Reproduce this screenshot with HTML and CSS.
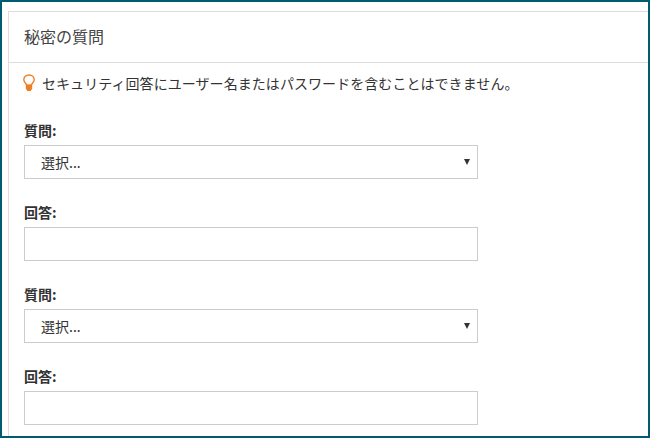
FILE: index.html
```html
<!DOCTYPE html>
<html lang="ja">
<head>
  <meta charset="UTF-8">
  <meta name="viewport" content="width=device-width, initial-scale=1.0">
  <title>秘密の質問</title>
  <link rel="stylesheet" href="styles.css">
</head>
<body>
  <div class="frame">
    <section class="panel">
      <h2 class="panel-title">秘密の質問</h2>
      <div class="panel-body">
        <p class="notice">
          <svg class="bulb" width="14" height="18" viewBox="0 0 14 18" aria-hidden="true">
            <path d="M4.800 11.200C4.400 9.400 1.800 8.400 1.800 5.800 1.800 3 4.100 1 7 1s5.200 2 5.200 4.800c0 2.600-2.600 3.600-3 5.400z" fill="#fff" stroke="#ef7d22" stroke-width="1.400"/>
            <path d="M3.800 10.800h6.400v3.700L8.700 17H5.300L3.800 14.500z" fill="#ef7d22"/>
          </svg>
          セキュリティ回答にユーザー名またはパスワードを含むことはできません。
        </p>

        <div class="field">
          <label for="q1">質問:</label>
          <div class="select-wrap">
            <select id="q1"><option>選択...</option></select>
          </div>
        </div>
        <div class="field">
          <label for="a1">回答:</label>
          <input type="text" id="a1">
        </div>
        <div class="field">
          <label for="q2">質問:</label>
          <div class="select-wrap">
            <select id="q2"><option>選択...</option></select>
          </div>
        </div>
        <div class="field">
          <label for="a2">回答:</label>
          <input type="text" id="a2">
        </div>
      </div>
    </section>
  </div>
</body>
</html>
```

FILE: styles.css
```css
* {
  box-sizing: border-box;
}
html, body {
  margin: 0;
  padding: 0;
}
body {
  font-family: "Noto Sans CJK JP", "Liberation Sans", sans-serif;
  color: #333;
  background: #fff;
}
.frame {
  width: 650px;
  height: 438px;
  border: 2px solid #005a70;
  padding: 9px 0 0 6px;
  overflow: hidden;
}
.panel {
  width: 642px;
  border: 1px solid #ddd;
  border-right: none;
  border-bottom: none;
  height: 500px;
}
.panel-title {
  margin: 0;
  height: 51px;
  padding: 0 15px;
  border-bottom: 1px solid #ddd;
  font-size: 16px;
  font-weight: 400;
  line-height: 49px;
  color: #444;
}
.panel-body {
  padding: 10px 15px;
}
.notice {
  display: flex;
  align-items: center;
  gap: 6px;
  margin: 0 0 28px -2px;
  height: 20px;
  font-size: 14px;
  letter-spacing: 0.06px;
  line-height: 20px;
}
.bulb {
  flex: none;
}
.field {
  margin-bottom: 24px;
}
.field label {
  display: block;
  height: 20px;
  margin-bottom: 4px;
  font-size: 14px;
  font-weight: 700;
  line-height: 18px;
}
.select-wrap {
  position: relative;
  width: 454px;
}
.select-wrap::after {
  content: "";
  position: absolute;
  top: 14px;
  right: 8px;
  border-left: 3.5px solid transparent;
  border-right: 3.5px solid transparent;
  border-top: 6px solid #333;
  pointer-events: none;
}
select, input[type="text"] {
  display: block;
  width: 454px;
  height: 34px;
  border: 1px solid #ccc;
  border-radius: 0;
  background: #fff;
  font-family: inherit;
  font-size: 14px;
  color: #333;
  outline: none;
}
select {
  appearance: none;
  padding: 0 16px;
}
```
